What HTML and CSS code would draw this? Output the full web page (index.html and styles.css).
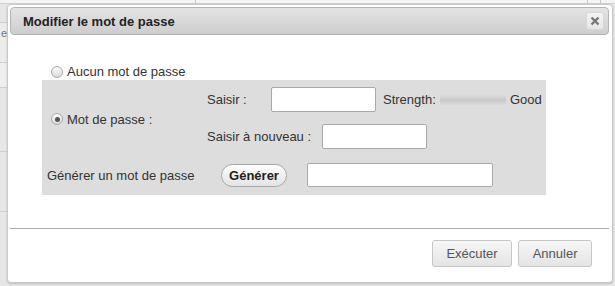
FILE: index.html
```html
<!DOCTYPE html>
<html lang="fr">
<head>
<meta charset="utf-8">
<title>Modifier le mot de passe</title>
<link rel="stylesheet" href="styles.css">
</head>
<body>
<div class="page">
  <div class="page-head"><span class="hc hc1"></span><span class="hc hc2"></span><span class="hc hc3"></span><span class="hc hc4"></span></div>
  <div class="page-row r1"></div>
  <div class="page-row r2"><span class="frag">e</span></div>
  <div class="page-row r3"></div>
  <div class="page-row r4"></div>
  <div class="page-row r5"></div>
</div>

<div class="dialog" role="dialog">
  <div class="titlebar">
    <span class="title">Modifier le mot de passe</span>
    <button class="close" aria-label="Fermer">
      <svg width="10" height="10" viewBox="0 0 10 10"><path d="M1.5 1.5 L8.5 8.5 M8.5 1.5 L1.5 8.5" stroke="#777" stroke-width="2.4" stroke-linecap="butt"/></svg>
    </button>
  </div>
  <div class="content">
    <label class="opt opt-none"><span class="radio"></span>Aucun mot de passe</label>
    <div class="box">
      <div class="box-top">
        <label class="opt opt-pass"><span class="radio checked"></span>Mot de passe :</label>
        <div class="fields">
          <div class="frow">
            <span class="lbl l1">Saisir :</span>
            <input class="in in1" type="password">
            <span class="strength">Strength:</span>
            <span class="bar"></span>
            <span class="good">Good</span>
          </div>
          <div class="frow">
            <span class="lbl l2">Saisir à nouveau :</span>
            <input class="in in2" type="password">
          </div>
        </div>
      </div>
      <div class="gen-row">
        <span class="gen-lbl">Générer un mot de passe</span>
        <button class="gen-btn">Générer</button>
        <input class="in in3" type="text">
      </div>
    </div>
  </div>
  <div class="footer">
    <button class="btn">Exécuter</button>
    <button class="btn">Annuler</button>
  </div>
</div>
</body>
</html>
```

FILE: styles.css
```css
* { box-sizing: border-box; }
html, body { margin: 0; padding: 0; }
body {
  width: 615px;
  height: 286px;
  overflow: hidden;
  background: #e6e6e6;
  font-family: "Liberation Sans", Arial, sans-serif;
  font-size: 13px;
  color: #333;
  position: relative;
}

/* background page */
.page { width: 615px; height: 286px; }
.page-head {
  height: 4px;
  background: #f4f4f4;
  border-bottom: 1px solid #cfcfcf;
  display: flex;
}
.hc { height: 100%; border-right: 1px solid #c8c8c8; }
.hc1 { width: 196px; }
.hc2 { width: 392px; }
.hc3 { width: 13px; }
.hc4 { flex: 1; border-right: 0; }
.page-row { border-bottom: 1px solid #cfcfcf; width: 7px; position: relative; }
.r1 { height: 19px; }
.r2 { height: 40px; background: #ececec; }
.r3 { height: 25px; background: #efefef; }
.r4 { height: 64px; }
.r5 { height: 60px; }
.frag { position: absolute; left: 1px; top: 4px; font-size: 11px; color: #777; }

/* dialog */
.dialog {
  position: absolute;
  left: 7px;
  top: 4px;
  width: 606px;
  height: 279px;
  background: #fff;
  border: 1px solid #c9c9c9;
  border-radius: 4px;
  box-shadow: 0 1px 2px rgba(0,0,0,0.18);
  padding: 2px 2px 0 1px;
  display: flex;
  flex-direction: column;
}

.titlebar {
  height: 28px;
  margin-left: 1px;
  margin-right: 1px;
  border: 1px solid #b4b4b4;
  border-radius: 4px;
  background: linear-gradient(#e4e4e4, #cdcdcd);
  display: flex;
  align-items: center;
  justify-content: space-between;
  padding: 0 4px 0 12px;
}
.title {
  font-weight: bold;
  color: #222;
  font-size: 13px;
}
.close {
  width: 18px;
  height: 18px;
  padding: 0;
  border: 1px solid #d8d8d8;
  border-radius: 3px;
  background: linear-gradient(#f4f4f4, #e6e6e6);
  display: flex;
  align-items: center;
  justify-content: center;
}
.close svg { display: block; }

.content {
  padding: 28px 0 0 33px;
}

.opt {
  display: flex;
  align-items: center;
  white-space: nowrap;
  color: #333;
}
.opt-none {
  margin-left: 9px;
  height: 17px;
}
.radio {
  width: 12px;
  height: 12px;
  border-radius: 50%;
  border: 1px solid #a8a8a8;
  background: linear-gradient(#fafafa, #dcdcdc);
  margin-right: 4px;
  position: relative;
  flex: none;
}
.radio.checked::after {
  content: "";
  position: absolute;
  left: 2.5px;
  top: 2.5px;
  width: 5px;
  height: 5px;
  border-radius: 50%;
  background: #555;
}

.box {
  width: 504px;
  background: #dddddd;
  padding: 7px 0 8px 0;
  margin-bottom: 33px;
}
.box-top {
  display: flex;
  align-items: center;
}
.opt-pass {
  width: 165px;
  padding-left: 9px;
  margin-top: 2px;
}
.fields {
  display: flex;
  flex-direction: column;
  gap: 12px;
}
.frow {
  display: flex;
  align-items: center;
  height: 25px;
  white-space: nowrap;
}
.lbl { color: #333; }
.l1 { width: 64px; }
.l2 { width: 115px; }

.in {
  height: 25px;
  border: 1px solid #a9a9a9;
  border-radius: 2px;
  background: #fff;
  padding: 2px 4px;
  font: inherit;
  outline: none;
}
.in1 { width: 105px; }
.in2 { width: 105px; }
.in3 { width: 186px; height: 24px; }

.strength { margin-left: 7px; width: 57px; }
.bar {
  width: 66px;
  height: 10px;
  background: linear-gradient(#dcdcdc, #c8c8c8 50%, #dadada);
}
.good { margin-left: 4px; }

.gen-row {
  display: flex;
  align-items: center;
  margin-top: 14px;
  padding-left: 5px;
  height: 24px;
}
.gen-lbl { width: 174px; white-space: nowrap; }
.gen-btn {
  width: 66px;
  height: 23px;
  border: 1px solid #a8a8a8;
  border-radius: 12px;
  background: linear-gradient(#fdfdfd, #e4e4e4);
  font-family: inherit;
  font-size: 13px;
  font-weight: bold;
  color: #222;
  padding: 0;
  margin-right: 20px;
}

.footer {
  border-top: 1px solid #a9a9a9;
  margin: 0 1px 0 1px;
  padding: 11px 17px 0 0;
  display: flex;
  justify-content: flex-end;
  gap: 6px;
}
.btn {
  height: 27px;
  padding: 0 13.5px;
  border: 1px solid #c6c6c6;
  border-radius: 3px;
  background: linear-gradient(#f7f7f7, #e4e4e4);
  font-family: inherit;
  font-size: 13px;
  color: #555;
}
```
